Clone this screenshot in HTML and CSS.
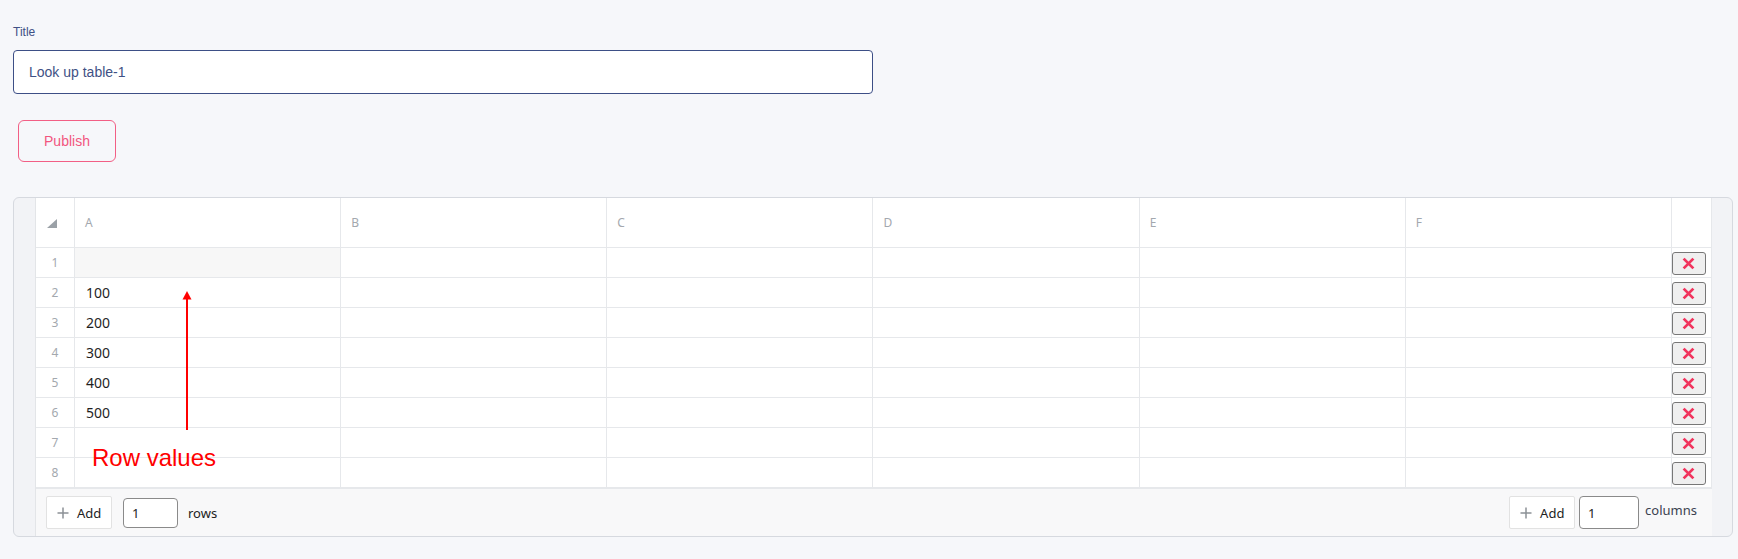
FILE: index.html
```html
<!DOCTYPE html>
<html lang="en">
<head>
<meta charset="utf-8">
<title>Look up table</title>
<link rel="stylesheet" href="styles.css">
</head>
<body>
<div class="page">
  <label class="field-label">Title</label>
  <div class="title-input">Look up table-1</div>
  <button class="publish">Publish</button>

  <div class="card">
    <div class="sheet">
      <div class="row head">
        <div class="cell rh"><span class="corner"></span></div>
        <div class="cell col">A</div>
        <div class="cell col">B</div>
        <div class="cell col">C</div>
        <div class="cell col">D</div>
        <div class="cell col">E</div>
        <div class="cell col">F</div>
        <div class="cell del"></div>
      </div>

      <div class="row"><div class="cell rh">1</div><div class="cell sel"></div><div class="cell"></div><div class="cell"></div><div class="cell"></div><div class="cell"></div><div class="cell"></div><div class="cell del"><button class="x"><svg viewBox="0 0 12 12" width="13" height="13"><path d="M1.5 1.5 L10.5 10.5 M10.5 1.5 L1.5 10.5"/></svg></button></div></div>
      <div class="row"><div class="cell rh">2</div><div class="cell val">100</div><div class="cell"></div><div class="cell"></div><div class="cell"></div><div class="cell"></div><div class="cell"></div><div class="cell del"><button class="x"><svg viewBox="0 0 12 12" width="13" height="13"><path d="M1.5 1.5 L10.5 10.5 M10.5 1.5 L1.5 10.5"/></svg></button></div></div>
      <div class="row"><div class="cell rh">3</div><div class="cell val">200</div><div class="cell"></div><div class="cell"></div><div class="cell"></div><div class="cell"></div><div class="cell"></div><div class="cell del"><button class="x"><svg viewBox="0 0 12 12" width="13" height="13"><path d="M1.5 1.5 L10.5 10.5 M10.5 1.5 L1.5 10.5"/></svg></button></div></div>
      <div class="row"><div class="cell rh">4</div><div class="cell val">300</div><div class="cell"></div><div class="cell"></div><div class="cell"></div><div class="cell"></div><div class="cell"></div><div class="cell del"><button class="x"><svg viewBox="0 0 12 12" width="13" height="13"><path d="M1.5 1.5 L10.5 10.5 M10.5 1.5 L1.5 10.5"/></svg></button></div></div>
      <div class="row"><div class="cell rh">5</div><div class="cell val">400</div><div class="cell"></div><div class="cell"></div><div class="cell"></div><div class="cell"></div><div class="cell"></div><div class="cell del"><button class="x"><svg viewBox="0 0 12 12" width="13" height="13"><path d="M1.5 1.5 L10.5 10.5 M10.5 1.5 L1.5 10.5"/></svg></button></div></div>
      <div class="row"><div class="cell rh">6</div><div class="cell val">500</div><div class="cell"></div><div class="cell"></div><div class="cell"></div><div class="cell"></div><div class="cell"></div><div class="cell del"><button class="x"><svg viewBox="0 0 12 12" width="13" height="13"><path d="M1.5 1.5 L10.5 10.5 M10.5 1.5 L1.5 10.5"/></svg></button></div></div>
      <div class="row"><div class="cell rh">7</div><div class="cell"></div><div class="cell"></div><div class="cell"></div><div class="cell"></div><div class="cell"></div><div class="cell"></div><div class="cell del"><button class="x"><svg viewBox="0 0 12 12" width="13" height="13"><path d="M1.5 1.5 L10.5 10.5 M10.5 1.5 L1.5 10.5"/></svg></button></div></div>
      <div class="row"><div class="cell rh">8</div><div class="cell"></div><div class="cell"></div><div class="cell"></div><div class="cell"></div><div class="cell"></div><div class="cell"></div><div class="cell del"><button class="x"><svg viewBox="0 0 12 12" width="13" height="13"><path d="M1.5 1.5 L10.5 10.5 M10.5 1.5 L1.5 10.5"/></svg></button></div></div>

      <div class="footer">
        <div class="group">
          <button class="add"><svg viewBox="0 0 12 12" width="12" height="12"><path d="M6 0.5 V11.5 M0.5 6 H11.5"/></svg><span>Add</span></button>
          <div class="num num-rows">1</div>
          <span class="unit">rows</span>
        </div>
        <div class="group">
          <button class="add"><svg viewBox="0 0 12 12" width="12" height="12"><path d="M6 0.5 V11.5 M0.5 6 H11.5"/></svg><span>Add</span></button>
          <div class="num num-cols">1</div>
          <span class="unit unit-cols">columns</span>
        </div>
      </div>

      <svg class="arrow" width="12" height="140" viewBox="0 0 12 140"><path class="shaft" d="M6 6 V139"/><path class="head" d="M1.5 8.5 L6 0 L10.5 8.5 Z"/></svg>
      <div class="note">Row values</div>
    </div>
  </div>
</div>
</body>
</html>
```

FILE: styles.css
```css
* { box-sizing: border-box; }

html, body {
  margin: 0;
  padding: 0;
  background: #f6f7fa;
}

body {
  font-family: "Liberation Sans", Arial, sans-serif;
}

.page {
  padding: 25px 0 0 13px;
}

.field-label {
  display: block;
  font-size: 12px;
  line-height: 14px;
  color: #3f5185;
  margin-bottom: 11px;
}

.title-input {
  width: 860px;
  height: 44px;
  border: 1px solid #3d4f86;
  border-radius: 4px;
  background: #ffffff;
  padding-left: 15px;
  display: flex;
  align-items: center;
  font-size: 14px;
  color: #3f5185;
}

.publish {
  display: block;
  margin: 26px 0 0 5px;
  width: 98px;
  height: 42px;
  border: 1px solid #f25f85;
  border-radius: 6px;
  background: transparent;
  color: #f2557e;
  font-family: "Liberation Sans", Arial, sans-serif;
  font-size: 14px;
  padding: 0;
}

.card {
  margin-top: 35px;
  width: 1720px;
  height: 340px;
  border: 1px solid #d6d9df;
  border-radius: 6px;
  background: #f2f3f6;
  padding: 0 19px 0 21px;
}

.sheet {
  position: relative;
  width: 1677px;
  border-left: 1px solid #e3e5e8;
  background: #ffffff;
  font-family: "Noto Sans", "Open Sans", sans-serif;
}

.row {
  display: grid;
  grid-template-columns: 39px repeat(6, 1fr) 40px;
  height: 30px;
}

.row.head {
  height: 50px;
}

.cell {
  border-right: 1px solid #e6e8eb;
  border-bottom: 1px solid #e6e8eb;
  display: flex;
  align-items: center;
  min-width: 0;
}

.cell.rh {
  justify-content: center;
  font-size: 12px;
  color: #a3a8ae;
}

.cell.col {
  padding-left: 10px;
  font-size: 12px;
  color: #a3a8ae;
}

.cell.sel {
  background: #f7f7f7;
}

.cell.val {
  padding-left: 11px;
  font-size: 14px;
  color: #1f1f1f;
}

.cell.del {
  align-items: flex-start;
  padding-top: 4px;
}

.corner {
  width: 0;
  height: 0;
  border-left: 10px solid transparent;
  border-bottom: 9px solid #9ba1a7;
  margin: 1px 0 0 -6px;
}

.x {
  width: 34px;
  height: 23px;
  border: 1px solid #777777;
  border-radius: 3px;
  background: #efefef;
  padding: 0;
  display: flex;
  align-items: center;
  justify-content: center;
}

.x svg path {
  stroke: #f1345d;
  stroke-width: 2.6;
  fill: none;
}

.footer {
  height: 48px;
  background: #f8f8f9;
  border-top: 1px solid #e6e8eb;
  display: flex;
  align-items: center;
  justify-content: space-between;
  padding: 0 15px 0 10px;
}

.group {
  display: flex;
  align-items: center;
}

.add {
  height: 33px;
  width: 66px;
  border: 1px solid #e2e2e2;
  border-radius: 2px;
  background: #ffffff;
  display: flex;
  align-items: center;
  padding: 0 0 0 10px;
  font-family: "Noto Sans", "Open Sans", sans-serif;
  font-size: 13px;
  color: #222222;
}

.add svg {
  margin-right: 8px;
}

.add svg path {
  stroke: #8c9196;
  stroke-width: 1.5;
  fill: none;
}

.num {
  margin-left: 11px;
  width: 55px;
  height: 30px;
  border: 1px solid #8a8a8a;
  border-radius: 4px;
  background: #ffffff;
  display: flex;
  align-items: center;
  padding-left: 8px;
  font-size: 13px;
  color: #222222;
}

.num-cols {
  margin-left: 4px;
  width: 60px;
  height: 33px;
}

.unit {
  margin-left: 10px;
  font-size: 13px;
  color: #222222;
}

.unit-cols {
  margin-left: 6px;
  color: #3a4250;
  margin-top: -6px;
}

.arrow {
  position: absolute;
  left: 145px;
  top: 93px;
  overflow: visible;
}

.arrow .shaft {
  stroke: #ff0000;
  stroke-width: 2;
  fill: none;
}

.arrow .head {
  fill: #ff0000;
}

.note {
  position: absolute;
  left: 56px;
  top: 246px;
  font-family: "Liberation Sans", Arial, sans-serif;
  font-size: 24px;
  color: #ff0000;
  white-space: nowrap;
}
```
